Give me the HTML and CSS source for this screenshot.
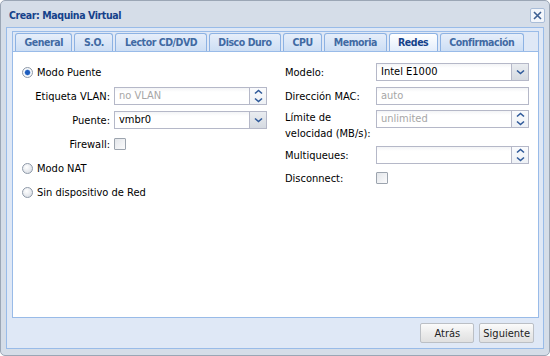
FILE: index.html
```html
<!DOCTYPE html>
<html lang="es">
<head>
    <meta charset="UTF-8">
    <meta name="viewport" content="width=device-width, initial-scale=1.0">
    <title>Crear: Maquina Virtual</title>
    <link rel="stylesheet" href="styles.css">
</head>
<body>
    <div class="window">
        <div class="win-header">
            <span class="win-title">Crear: Maquina Virtual</span>
            <span class="win-close">
                <svg width="15" height="15" viewBox="0 0 15 15">
                    <rect x="0.5" y="0.5" width="14" height="14" rx="1.5" fill="#f3f6fb" stroke="#a9bdd8"/>
                    <path d="M4 4 L11 11 M11 4 L4 11" stroke="#3d5f92" stroke-width="1.6"/>
                </svg>
            </span>
        </div>

        <div class="win-body">
            <div class="tabpanel">
                <ul class="tabbar">
                    <li class="tab">General</li>
                    <li class="tab">S.O.</li>
                    <li class="tab">Lector CD/DVD</li>
                    <li class="tab">Disco Duro</li>
                    <li class="tab">CPU</li>
                    <li class="tab">Memoria</li>
                    <li class="tab active">Redes</li>
                    <li class="tab">Confirmación</li>
                </ul>

                <div class="tab-body">
                    <div class="col col-left">
                        <div class="radio-row">
                            <span class="radio checked"></span>
                            <span>Modo Puente</span>
                        </div>
                        <div class="field-row">
                            <label class="label-right">Etiqueta VLAN:</label>
                            <div class="field">
                                <span class="text muted">no VLAN</span>
                                <span class="trigger spin">
                                    <svg width="9" height="6" viewBox="0 0 9 6"><path d="M1 4.5 L4.5 1.5 L8 4.5" fill="none" stroke="#2f5a9a" stroke-width="1.6"/></svg>
                                    <svg width="9" height="6" viewBox="0 0 9 6"><path d="M1 1.5 L4.5 4.5 L8 1.5" fill="none" stroke="#2f5a9a" stroke-width="1.6"/></svg>
                                </span>
                            </div>
                        </div>
                        <div class="field-row">
                            <label class="label-right">Puente:</label>
                            <div class="field">
                                <span class="text">vmbr0</span>
                                <span class="trigger combo">
                                    <svg width="9" height="6" viewBox="0 0 9 6"><path d="M1 1.5 L4.5 4.5 L8 1.5" fill="none" stroke="#2f5a9a" stroke-width="1.6"/></svg>
                                </span>
                            </div>
                        </div>
                        <div class="field-row">
                            <label class="label-right">Firewall:</label>
                            <span class="checkbox"></span>
                        </div>
                        <div class="radio-row">
                            <span class="radio"></span>
                            <span>Modo NAT</span>
                        </div>
                        <div class="radio-row">
                            <span class="radio"></span>
                            <span>Sin dispositivo de Red</span>
                        </div>
                    </div>

                    <div class="col col-right">
                        <div class="field-row">
                            <label>Modelo:</label>
                            <div class="field">
                                <span class="text">Intel E1000</span>
                                <span class="trigger combo">
                                    <svg width="9" height="6" viewBox="0 0 9 6"><path d="M1 1.5 L4.5 4.5 L8 1.5" fill="none" stroke="#2f5a9a" stroke-width="1.6"/></svg>
                                </span>
                            </div>
                        </div>
                        <div class="field-row">
                            <label>Dirección MAC:</label>
                            <div class="field">
                                <span class="text muted">auto</span>
                            </div>
                        </div>
                        <div class="field-row top">
                            <label class="two-line">Límite de velocidad (MB/s):</label>
                            <div class="field">
                                <span class="text muted">unlimited</span>
                                <span class="trigger spin">
                                    <svg width="9" height="6" viewBox="0 0 9 6"><path d="M1 4.5 L4.5 1.5 L8 4.5" fill="none" stroke="#2f5a9a" stroke-width="1.6"/></svg>
                                    <svg width="9" height="6" viewBox="0 0 9 6"><path d="M1 1.5 L4.5 4.5 L8 1.5" fill="none" stroke="#2f5a9a" stroke-width="1.6"/></svg>
                                </span>
                            </div>
                        </div>
                        <div class="field-row">
                            <label>Multiqueues:</label>
                            <div class="field">
                                <span class="text"></span>
                                <span class="trigger spin">
                                    <svg width="9" height="6" viewBox="0 0 9 6"><path d="M1 4.5 L4.5 1.5 L8 4.5" fill="none" stroke="#2f5a9a" stroke-width="1.6"/></svg>
                                    <svg width="9" height="6" viewBox="0 0 9 6"><path d="M1 1.5 L4.5 4.5 L8 1.5" fill="none" stroke="#2f5a9a" stroke-width="1.6"/></svg>
                                </span>
                            </div>
                        </div>
                        <div class="field-row">
                            <label>Disconnect:</label>
                            <span class="checkbox"></span>
                        </div>
                    </div>
                </div>
            </div>

            <div class="toolbar">
                <button class="btn btn-back">Atrás</button>
                <button class="btn">Siguiente</button>
            </div>
        </div>
    </div>
</body>
</html>
```

FILE: styles.css
```css
* {
    box-sizing: border-box;
}

body {
    margin: 0;
    font-family: "DejaVu Sans Condensed", "DejaVu Sans", sans-serif;
    font-stretch: condensed;
    font-size: 11px;
    color: #000;
    background: #fff;
}

/* window frame */
.window {
    width: 550px;
    height: 356px;
    border: 1px solid #9ba6b5;
    border-radius: 5px;
    background: #d5dde8;
    padding: 0 5px 6px 5px;
    display: flex;
    flex-direction: column;
}

.win-header {
    height: 26px;
    padding: 2px 0 0 3px;
    display: flex;
    align-items: center;
    justify-content: space-between;
}

.win-title {
    font-weight: bold;
    font-size: 10.5px;
    letter-spacing: -0.4px;
    color: #15428b;
}

.win-close {
    display: flex;
    margin-right: -1px;
}

.win-body {
    flex: 1;
    border: 1px solid #99bbe8;
    background: #dfe8f6;
    padding: 3px 4px 0 5px;
    display: flex;
    flex-direction: column;
}

/* tabs */
.tabpanel {
    flex: 1;
    border: 1px solid #99bbe8;
    display: flex;
    flex-direction: column;
}

.tabbar {
    list-style: none;
    margin: 0;
    padding: 1px 0 0 2px;
    display: flex;
    gap: 2px;
    border-bottom: 1px solid #99bbe8;
}

.tab {
    flex-shrink: 0;
    height: 18px;
    padding: 0 8.5px;
    border: 1px solid #8db2e3;
    border-bottom: none;
    border-radius: 3px 3px 0 0;
    background: linear-gradient(#e6eefa, #cddef4);
    color: #416aa3;
    font-weight: bold;
    font-size: 10.5px;
    letter-spacing: -0.45px;
    line-height: 17px;
    white-space: nowrap;
}

.tab.active {
    background: linear-gradient(#ffffff, #e3edfb);
    color: #15428b;
}

.tab-body {
    flex: 1;
    background: #fff;
    padding: 11px 0 0 9px;
    display: flex;
    align-items: flex-start;
}

/* form */
.col {
    display: flex;
    flex-direction: column;
}

.col-left {
    width: 263px;
    gap: 6px;
}

.col-right {
    gap: 5px;
}

.col-right .field-row:first-child {
    margin-bottom: 1px;
}

.radio-row {
    height: 18px;
    display: flex;
    align-items: center;
    gap: 4px;
}

.radio {
    width: 11px;
    height: 11px;
    border-radius: 50%;
    border: 1px solid #8e99a8;
    background: radial-gradient(circle at 40% 35%, #ffffff, #d2d7df);
}

.radio.checked {
    background: radial-gradient(circle, #1d5cbd 0 2px, #7aa6e3 2.7px, #ffffff 3.3px, #dde2e9 100%);
}

.field-row {
    display: grid;
    grid-template-columns: 92px 153px;
    align-items: center;
    min-height: 18px;
}

.col-right .field-row {
    grid-template-columns: 91px 153px;
}

.field-row.top {
    align-items: start;
}

.label-right {
    text-align: right;
    padding-right: 4px;
}

.two-line {
    line-height: 15.5px;
}

.field {
    height: 18px;
    display: flex;
    border: 1px solid #b5b8c8;
    background: linear-gradient(#f3f4f6, #fff 4px);
}

.text {
    flex: 1;
    padding: 0 4px;
    line-height: 16px;
}

.text.muted {
    color: #a6a6a6;
}

.trigger {
    width: 17px;
    border-left: 1px solid #b5b8c8;
    display: flex;
    flex-direction: column;
    align-items: center;
    justify-content: center;
}

.trigger.combo {
    background: linear-gradient(#e9ecf0, #d5dae1);
}

.trigger.spin {
    background: linear-gradient(#fafbfd, #eef1f5);
    gap: 2px;
}

.checkbox {
    width: 12px;
    height: 12px;
    border: 1px solid #9ca4ae;
    border-radius: 1px;
    background: linear-gradient(135deg, #e3e6ea, #fbfbfc);
}

/* bottom toolbar */
.toolbar {
    height: 30px;
    display: flex;
    align-items: center;
    justify-content: flex-end;
    gap: 5px;
    padding-right: 5px;
}

.btn {
    height: 20px;
    padding: 0 3px;
    border: 1px solid #bbbfc5;
    border-radius: 2px;
    background: linear-gradient(#fbfbfb, #ececec 50%, #e0e0e0);
    font: inherit;
    color: #222;
}

.btn-back {
    min-width: 54px;
}
```
